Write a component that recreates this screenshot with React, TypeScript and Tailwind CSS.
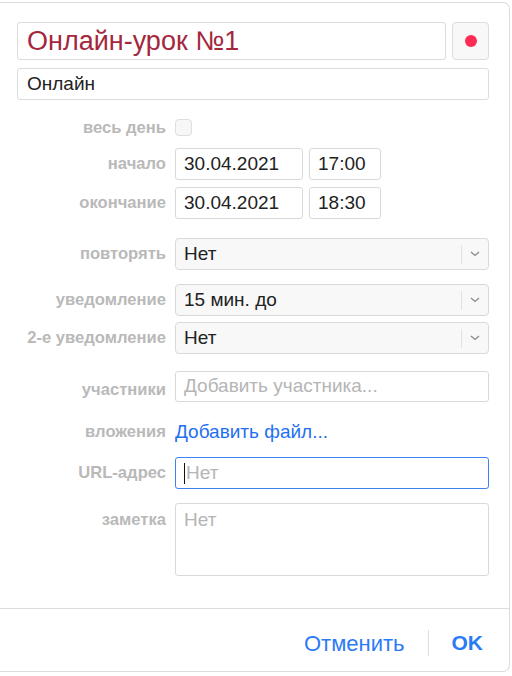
import React from "react";

const font = { fontFamily: '"Liberation Sans", Arial, sans-serif' };

function Label({ children, className = "" }: { children: React.ReactNode; className?: string }) {
  return (
    <div className={"w-[149px] shrink-0 text-right text-[16.6px] leading-[24px] font-bold text-[#b9b9b9] " + className}>
      {children}
    </div>
  );
}

function Select({ value }: { value: string }) {
  return (
    <div className="flex h-[32px] flex-1 items-center rounded-[4px] border border-[#d9d9d9] bg-[#f8f8f8]">
      <div className="flex-1 pl-[8px] text-[19px] text-[#222]">{value}</div>
      <div className="h-[19px] w-px bg-[#e2e2e2]" />
      <div className="flex w-[26px] items-center justify-center">
        <svg width="10" height="6" viewBox="0 0 10 6">
          <path d="M1 1l4 3.5L9 1" fill="none" stroke="#8a8a8a" strokeWidth="1.3" />
        </svg>
      </div>
    </div>
  );
}

export default function App() {
  return (
    <div className="h-[676px] w-[512px] bg-white" style={font}>
      <div className="pt-[2px]">
        <div className="flex h-[670px] w-[510px] flex-col rounded-r-[7px] border border-l-0 border-[#dcdcdc]">
          <div className="flex flex-1 flex-col pl-[17px] pr-[20px] pt-[19px]">
            <div className="flex gap-[6px]">
              <div className="flex h-[38px] flex-1 items-center rounded-[3px] border border-[#dcdcdc] pl-[9px] text-[27px] text-[#a3283d]">
                Онлайн-урок №1
              </div>
              <div className="flex h-[38px] w-[37px] items-center justify-center rounded-[4px] border border-[#dcdcdc] bg-[#f8f8f8]">
                <div className="h-[12px] w-[12px] rounded-full bg-[#ff2b55]" />
              </div>
            </div>
            <div className="mt-[8px] flex h-[32px] items-center rounded-[3px] border border-[#dcdcdc] pl-[9px] text-[19px] text-[#222]">
              Онлайн
            </div>

            <div className="mt-[19px] flex h-[17px] items-center gap-[9px]">
              <Label>весь день</Label>
              <div className="h-[17px] w-[17px] rounded-[4px] border border-[#dedede] bg-[#f7f7f7]" />
            </div>

            <div className="mt-[12px] flex h-[32px] items-center gap-[9px]">
              <Label>начало</Label>
              <div className="flex h-[32px] w-[128px] items-center rounded-[3px] border border-[#d9d9d9] pl-[8px] text-[19px] text-[#222]">
                30.04.2021
              </div>
              <div className="flex h-[32px] w-[72px] -ml-[3px] items-center rounded-[3px] border border-[#d9d9d9] pl-[8px] text-[19px] text-[#222]">
                17:00
              </div>
            </div>
            <div className="mt-[7px] flex h-[32px] items-center gap-[9px]">
              <Label>окончание</Label>
              <div className="flex h-[32px] w-[128px] items-center rounded-[3px] border border-[#d9d9d9] pl-[8px] text-[19px] text-[#222]">
                30.04.2021
              </div>
              <div className="flex h-[32px] w-[72px] -ml-[3px] items-center rounded-[3px] border border-[#d9d9d9] pl-[8px] text-[19px] text-[#222]">
                18:30
              </div>
            </div>

            <div className="mt-[19px] flex items-center gap-[9px]">
              <Label>повторять</Label>
              <Select value="Нет" />
            </div>
            <div className="mt-[14px] flex items-center gap-[9px]">
              <Label>уведомление</Label>
              <Select value="15 мин. до" />
            </div>
            <div className="mt-[6px] flex items-center gap-[9px]">
              <Label>2-е уведомление</Label>
              <Select value="Нет" />
            </div>

            <div className="mt-[17px] flex h-[31px] items-start gap-[9px]">
              <Label className="pt-[7px]">участники</Label>
              <div className="flex h-[31px] flex-1 items-center rounded-[3px] border border-[#d9d9d9] pl-[8px] text-[19px] text-[#b5b5b5]">
                Добавить участника...
              </div>
            </div>

            <div className="mt-[14px] flex h-[32px] items-center gap-[9px]">
              <Label>вложения</Label>
              <div className="text-[19px] text-[#1f6ff2]">Добавить файл...</div>
            </div>

            <div className="mt-[9px] flex items-center gap-[9px]">
              <Label>URL-адрес</Label>
              <div className="flex h-[32px] flex-1 items-center rounded-[3px] border border-[#3c82f0] pl-[8px] text-[19px] text-[#b5b5b5]">
                <span className="mr-[1px] h-[21px] w-px bg-[#111]" />
                Нет
              </div>
            </div>

            <div className="mt-[14px] flex items-start gap-[9px]">
              <Label className="pt-[5px]">заметка</Label>
              <div className="h-[73px] flex-1 rounded-[3px] border border-[#d9d9d9] pl-[8px] pt-[2px] text-[19px] leading-[28px] text-[#b5b5b5]">
                Нет
              </div>
            </div>
          </div>

          <div className="flex h-[63px] items-center justify-end border-t border-[#dcdcdc] pr-[26px]">
            <div className="pt-[6px] text-[22px] text-[#2b7bf5]">Отменить</div>
            <div className="mx-[23px] mt-[6px] h-[26px] w-px bg-[#dedede]" />
            <div className="pt-[6px] text-[21px] font-semibold text-[#2b7bf5]">OK</div>
          </div>
        </div>
      </div>
    </div>
  );
}
